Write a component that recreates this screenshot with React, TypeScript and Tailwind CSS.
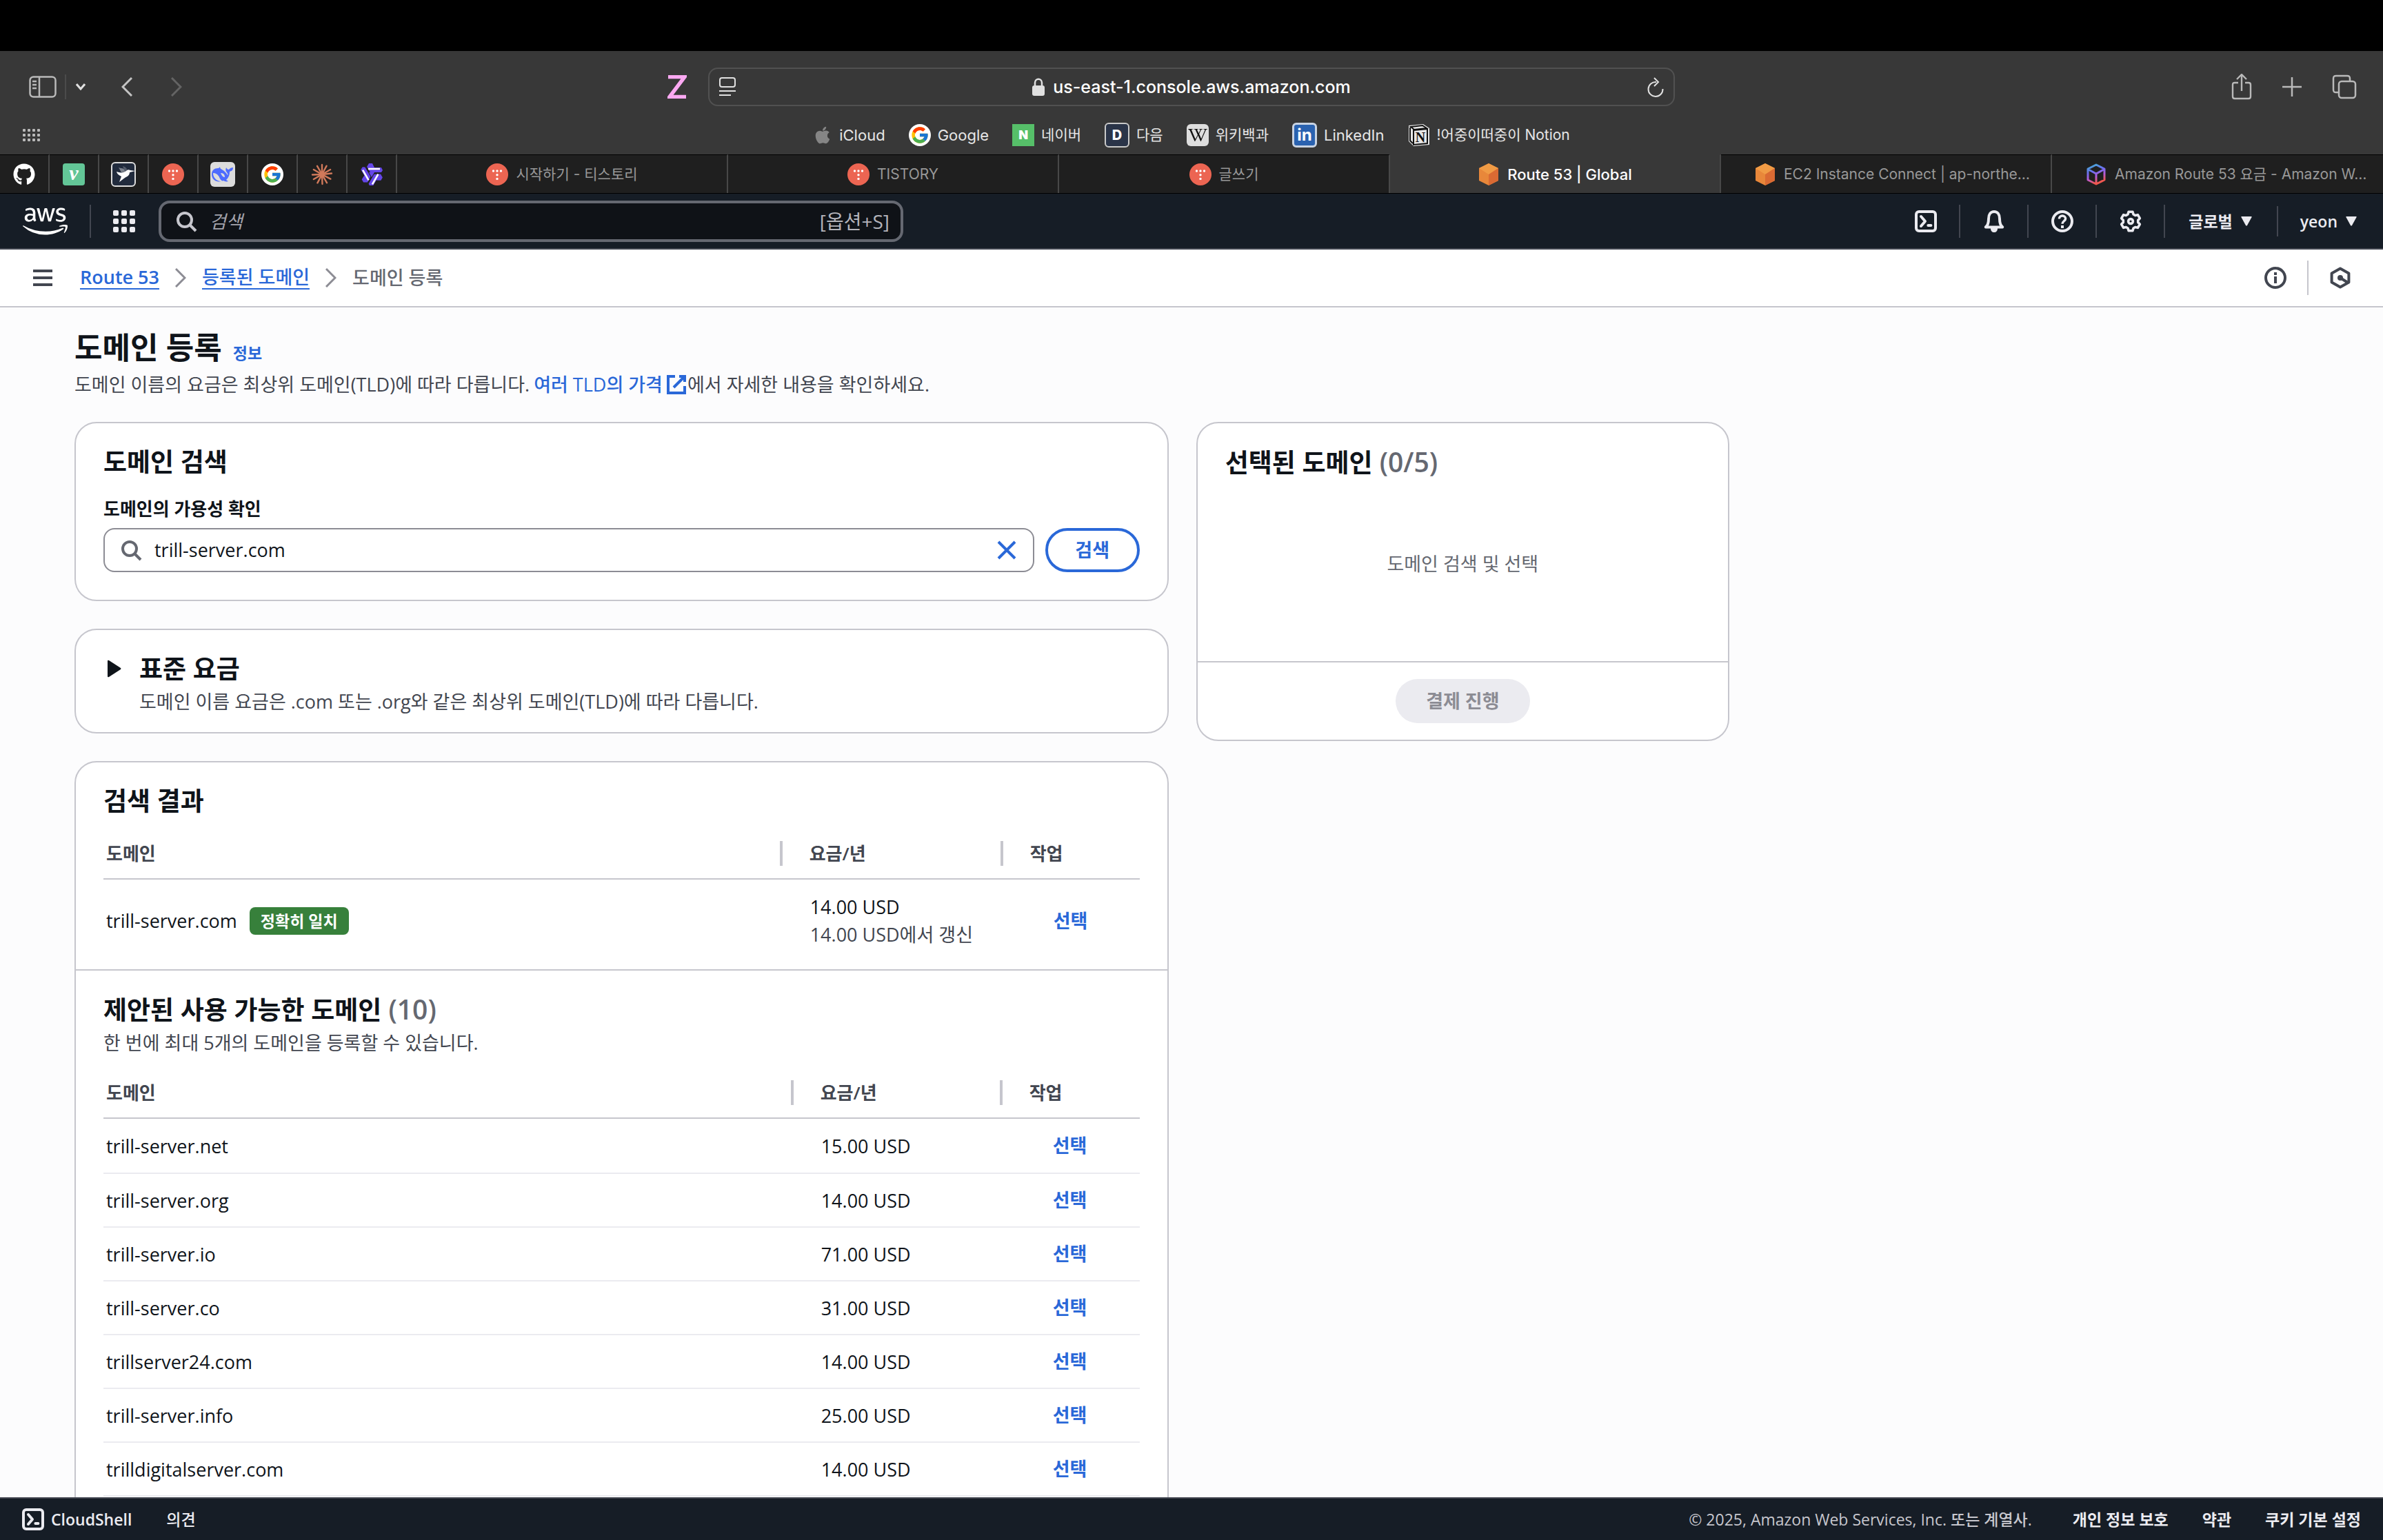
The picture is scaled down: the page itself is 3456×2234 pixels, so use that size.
import { useState, type ReactNode } from "react";
import clsx from "clsx";
import { FaApple, FaAws, FaGithub, FaWikipediaW } from "react-icons/fa";
import { FcGoogle } from "react-icons/fc";

interface Domain {
  name: string;
  price: string;
}

const SUGGESTED: Domain[] = [
  { name: "trill-server.net", price: "15.00 USD" },
  { name: "trill-server.org", price: "14.00 USD" },
  { name: "trill-server.io", price: "71.00 USD" },
  { name: "trill-server.co", price: "31.00 USD" },
  { name: "trillserver24.com", price: "14.00 USD" },
  { name: "trill-server.info", price: "25.00 USD" },
  { name: "trilldigitalserver.com", price: "14.00 USD" },
];

/* ---------- icons ---------- */

interface IconProps {
  className?: string;
  children?: ReactNode;
}

// 16-unit grid, 2-unit strokes
function Icon({ className = "size-8", children }: IconProps) {
  return (
    <svg
      viewBox="0 0 16 16"
      fill="none"
      stroke="currentColor"
      strokeWidth="2"
      className={clsx("shrink-0", className)}
      aria-hidden="true"
    >
      {children}
    </svg>
  );
}

function SearchIcon({ className }: IconProps) {
  return (
    <Icon className={className}>
      <circle cx="7" cy="7" r="5" />
      <path d="m15 15-4.5-4.5" />
    </Icon>
  );
}

function ShellIcon() {
  return (
    <Icon>
      <rect x="1" y="1" width="14" height="14" rx="2" />
      <path d="m4.5 4.5 3 3.5-3 3.5" strokeLinecap="round" strokeLinejoin="round" />
      <path d="M9.7 11h2" strokeLinecap="round" />
    </Icon>
  );
}

function BellIcon() {
  return (
    <Icon>
      <path
        d="M1.9 12.2c1.6-1.3 2.1-3 2.1-6C4 3 5.5 1 8 1s4 2 4 5.2c0 3 .5 4.7 2.1 6Z"
        strokeLinejoin="round"
      />
      <path d="M5.5 13h5c0 2-1 3-2.5 3s-2.5-1-2.5-3Z" fill="currentColor" stroke="none" />
    </Icon>
  );
}

function HelpIcon() {
  return (
    <Icon>
      <circle cx="8" cy="8" r="7" />
      <path d="M5.7 6.3C5.7 4.9 6.7 4 8 4s2.3.9 2.3 2.1C10.3 7.700 8 7.800 8 9.900" strokeWidth="1.7" />
      <path d="M8 11v2" />
    </Icon>
  );
}

function gearPath() {
  const points: string[] = [];
  for (let i = 0; i < 6; i++) {
    const mid = -90 + i * 60;
    for (const [offset, radius] of [[-22, 5.4], [-12, 7], [12, 7], [22, 5.4]]) {
      const a = ((mid + offset) * Math.PI) / 180;
      points.push(`${(8 + radius * Math.cos(a)).toFixed(2)} ${(8 + radius * Math.sin(a)).toFixed(2)}`);
    }
  }
  return `M${points.join("L")}Z`;
}

function GearIcon() {
  return (
    <Icon>
      <path d={gearPath()} strokeLinejoin="round" strokeWidth="1.8" />
      <circle cx="8" cy="8" r="1.7" strokeWidth="1.8" />
    </Icon>
  );
}

function TistoryIcon() {
  return (
    <svg viewBox="0 0 32 32" className="size-8 shrink-0" aria-hidden="true">
      <circle cx="16" cy="16" r="16" fill="#ec6552" />
      <g fill="#fff">
        <circle cx="10.5" cy="11" r="1.7" />
        <circle cx="16" cy="11" r="1.7" />
        <circle cx="21.5" cy="11" r="1.7" />
        <circle cx="16" cy="16.7" r="1.7" />
        <circle cx="16" cy="22.4" r="1.7" />
      </g>
    </svg>
  );
}

function GoogleIcon() {
  return (
    <span className="flex size-8 shrink-0 items-center justify-center rounded-full bg-white">
      <FcGoogle className="size-7" />
    </span>
  );
}

function CubeIcon() {
  return (
    <svg viewBox="0 0 32 32" className="size-8 shrink-0" aria-hidden="true">
      <path d="M16 0 30 7v18l-14 7L2 25V7Z" fill="#e8873a" />
      <path d="m16 0 14 7-14 9L2 7Z" fill="#f09b45" />
      <path d="M16 16 30 7v18l-14 7Z" fill="#da6a33" />
    </svg>
  );
}

function OutlineCubeIcon() {
  return (
    <svg viewBox="0 0 32 32" className="size-8 shrink-0" aria-hidden="true">
      <defs>
        <linearGradient id="cube" x1="0" y1="0" x2="0.3" y2="1">
          <stop offset="0" stopColor="#3fb4cf" />
          <stop offset="0.4" stopColor="#6a6ff0" />
          <stop offset="0.7" stopColor="#b55bd8" />
          <stop offset="1" stopColor="#f0574f" />
        </linearGradient>
      </defs>
      <path
        d="M16 2 28 8v16l-12 6L4 24V8Zm0 13v15M16 15 5 9M16 15l11-6"
        fill="none"
        stroke="url(#cube)"
        strokeWidth="3"
        strokeLinejoin="round"
      />
    </svg>
  );
}

function HummingbirdIcon() {
  return (
    <svg viewBox="0 0 36 36" className="size-9 shrink-0" aria-hidden="true">
      <rect x="1" y="1" width="34" height="34" rx="5" fill="#212b3d" stroke="#dcdcdc" strokeWidth="2" />
      <path d="m11 8 4 7 7-1c-2-4-5-5-8-5Z" fill="#7d838e" />
      <path d="m17 6 3 8 4-1c-1-4-3-6-7-7Z" fill="#545c6b" />
      <path d="M8 14c5 2 10 2 14-1 2-2 4-2 6-1l7 1-8 2c0 5-4 6-7 8-3 2-5 4-8 6l3-8c-3-2-6-3-7-7Z" fill="#fff" />
    </svg>
  );
}

function WhaleIcon() {
  return (
    <svg viewBox="0 0 36 36" className="size-9 shrink-0" aria-hidden="true">
      <rect width="36" height="36" rx="6" fill="#dcdcdc" />
      <path
        d="M2 18c0-6 4-9 9-9 2 0 2-1 3-2 0 2 1 3 3 4 4 2 6 5 8 8 1-1 0-2-1-4-2-2-2-4-1-7 1 2 2 3 4 3 1-2 4-3 6-3 0 4-2 5-5 6 0 6-2 9-5 12l3 2c-3 1-5 0-7-1-9 4-17-1-17-9Z"
        fill="#4d6bfe"
      />
      <path d="M4 16c4 0 7 2 9 6 1 3 3 5 5 6-7 1-14-4-14-12Z" fill="#dcdcdc" />
      <path d="M15 16c4 0 6 2 6 6-3 0-4-2-6-6Z" fill="#dcdcdc" />
    </svg>
  );
}

function BurstIcon() {
  const rays = [0, 28, 60, 84, 118, 150, 178, 208, 240, 268, 300, 330];
  return (
    <svg viewBox="0 0 32 32" className="size-8 shrink-0" aria-hidden="true">
      <g stroke="#d0795a" strokeWidth="2.4" strokeLinecap="round">
        {rays.map((deg) => (
          <path key={deg} d="M16 16V2" transform={`rotate(${deg} 16 16)`} />
        ))}
      </g>
      <circle cx="16" cy="16" r="4" fill="#d0795a" />
    </svg>
  );
}

function StarKnotIcon() {
  return (
    <svg viewBox="0 0 32 32" className="size-8 shrink-0" aria-hidden="true">
      {[0, 120, 240].map((deg) => (
        <g key={deg} transform={`rotate(${deg} 16 16)`}>
          <path d="M12 0h5l3 6h10l2 4-2 3H14L9 5Z" fill="#6546e8" />
          <path d="M11 8h17" stroke="#fff" strokeWidth="2.6" />
        </g>
      ))}
      <path d="M12 13h8l-4 7Z" fill="#6546e8" />
    </svg>
  );
}

function NotionIcon() {
  return (
    <svg viewBox="0 0 32 34" className="h-[34px] w-8 shrink-0" aria-hidden="true">
      <path d="M1 3 22 1l9 6v24L8 33l-7-7Z" fill="#e6e6e6" />
      <path d="M4 5 21 3l6 4L9 9Z" fill="none" stroke="#111" strokeWidth="2" />
      <path d="M8 10l20-2v21L8 31Z" fill="#e6e6e6" stroke="#111" strokeWidth="2" />
      <path d="M3 6v19l4 4" fill="none" stroke="#111" strokeWidth="2" />
      <text x="18" y="27" textAnchor="middle" className="fill-[#111] font-['Liberation_Serif',serif] text-[20px] font-bold">
        N
      </text>
    </svg>
  );
}

function Chevron({ className }: { className: string }) {
  return (
    <svg viewBox="0 0 16 28" className={clsx("h-7 w-4 shrink-0", className)} fill="none" aria-hidden="true">
      <path d="m1 1 13 13L1 27" stroke="currentColor" strokeWidth="3" />
    </svg>
  );
}

/* ---------- browser chrome ---------- */

function Toolbar() {
  return (
    <div className="grid h-[104px] grid-cols-[1fr_minmax(0,1402px)_1fr] items-center">
      <div className="flex items-center pr-[31px] pl-[42px] text-[#b9b9b9]">
        <button aria-label="사이드바">
          <svg viewBox="0 0 40 32" className="h-8 w-10" fill="none" stroke="currentColor" strokeWidth="2.5">
            <rect x="1.5" y="1.5" width="37" height="29" rx="5" />
            <path d="M15 2v28M5 8h6M5 13h6M5 18h6" />
          </svg>
        </button>
        <span className="ml-3 h-9 w-0.5 bg-[#4b4b4b]" />
        <button aria-label="탭 그룹" className="ml-[14px]">
          <svg viewBox="0 0 14 10" className="h-2.5 w-3.5" fill="none" stroke="#e0e0e0" strokeWidth="3">
            <path d="m1 1 6 7 6-7" />
          </svg>
        </button>
        <button aria-label="뒤로" className="ml-[52px] rotate-180">
          <Chevron className="text-[#c4c4c4]" />
        </button>
        <button aria-label="앞으로" className="ml-14">
          <Chevron className="text-[#646464]" />
        </button>
        <svg viewBox="0 0 28 34" className="ml-auto h-[34px] w-7" aria-label="확장 프로그램">
          <path d="M1 2.5h24L3 31.5h24" fill="none" stroke="#fba9f2" strokeWidth="5.500" />
        </svg>
      </div>
      <div className="flex h-14 items-center rounded-[14px] border-2 border-[#515151] px-3.5 text-[#e0e0e0]">
        <button aria-label="읽기 도구">
          <svg viewBox="0 0 24 28" className="h-7 w-6" fill="none" stroke="currentColor" strokeWidth="2">
            <rect x="1" y="1" width="22" height="13" rx="3" />
            <path d="M0 20h24M0 26h17" />
          </svg>
        </button>
        <div className="flex flex-1 items-center justify-center gap-3">
          <svg viewBox="0 0 18 26" className="h-[26px] w-[18px]" aria-hidden="true">
            <rect y="11" width="18" height="15" rx="3" fill="currentColor" />
            <path d="M4 12V7c0-7 10-7 10 0v5" fill="none" stroke="currentColor" strokeWidth="2.5" />
          </svg>
          <span className="text-[25px] leading-8 font-medium text-white">us-east-1.console.aws.amazon.com</span>
        </div>
        <button aria-label="새로 고침">
          <svg viewBox="0 0 24 30" className="h-[30px] w-6" fill="none" stroke="currentColor" strokeWidth="2">
            <path d="M13 8A10.5 10.5 0 1 0 22.5 18M10 2l6 6-6 6" />
          </svg>
        </button>
      </div>
      <div className="flex items-center justify-end gap-11 pr-[38px] text-[#b9b9b9]">
        <button aria-label="공유">
          <svg viewBox="0 0 30 38" className="h-[38px] w-[30px]" fill="none" stroke="currentColor" strokeWidth="2.4">
            <path d="M10 13H5c-2 0-3 1-3 3v17c0 2 1 3 3 3h20c2 0 3-1 3-3V16c0-2-1-3-3-3h-5M15 25V2M8 8l7-7 7 7" />
          </svg>
        </button>
        <button aria-label="새 탭">
          <svg viewBox="0 0 28 28" className="size-7" stroke="currentColor" strokeWidth="2.5">
            <path d="M14 0v28M0 14h28" />
          </svg>
        </button>
        <button aria-label="탭 개요">
          <svg viewBox="0 0 36 36" className="size-9" fill="none" stroke="currentColor" strokeWidth="2.5">
            <rect x="10" y="10" width="24" height="24" rx="4" />
            <path d="M10 26H6c-3 0-4-1-4-4V6c0-3 1-4 4-4h16c3 0 4 1 4 4v4" />
          </svg>
        </button>
      </div>
    </div>
  );
}

const BOOKMARKS: { label: string; icon: ReactNode; korean?: boolean }[] = [
  { label: "iCloud", icon: <FaApple className="size-7 text-[#858585]" /> },
  { label: "Google", icon: <GoogleIcon /> },
  {
    label: "네이버",
    korean: true,
    icon: (
      <span className="flex size-8 items-center justify-center bg-[#56bf69] text-[18px] font-black text-white">N</span>
    ),
  },
  {
    label: "다음",
    korean: true,
    icon: (
      <span className="flex size-9 items-center justify-center rounded-md border-2 border-[#c9c9c9] bg-[#2a3448] text-[20px] font-extrabold text-white">
        D
      </span>
    ),
  },
  {
    label: "위키백과",
    korean: true,
    icon: (
      <span className="flex size-8 items-center justify-center rounded-md bg-[#dedede] text-[#111]">
        <FaWikipediaW className="size-7" />
      </span>
    ),
  },
  {
    label: "LinkedIn",
    icon: (
      <span className="flex size-9 items-center justify-center rounded-md border-3 border-[#c9d3e2] bg-[#2a62b0] text-[24px] leading-6 font-bold text-white">
        in
      </span>
    ),
  },
  { label: "!어중이떠중이 Notion", korean: true, icon: <NotionIcon /> },
];

function Bookmarks() {
  return (
    <div className="grid h-[46px] grid-cols-[1fr_auto_1fr] items-center pb-4">
      <button aria-label="시작 페이지" className="justify-self-start pl-[33px]">
        <svg viewBox="0 0 26 18" className="h-[18px] w-[26px]" fill="#b9b9b9">
          {[0, 7, 14].map((y) =>
            [0, 7, 14, 21].map((x) => <rect key={`${x}-${y}`} x={x} y={y} width="4" height="4" rx="1" />)
          )}
        </svg>
      </button>
      <nav className="flex items-center gap-[34px]">
        {BOOKMARKS.map((b) => (
          <a
            key={b.label}
            href="#"
            className={clsx(
              "flex items-center gap-2.5 leading-8 text-[#e6e6e6]",
              b.korean ? "text-[21px]" : "text-[22px]"
            )}
          >
            {b.icon}
            {b.label}
          </a>
        ))}
      </nav>
      <span />
    </div>
  );
}

const PINNED: { label: string; icon: ReactNode }[] = [
  { label: "GitHub", icon: <FaGithub className="size-8 text-white" /> },
  {
    label: "velog",
    icon: (
      <span className="flex size-8 items-center justify-center rounded-sm bg-[#63c697] pb-1 font-['Liberation_Serif',serif] text-[30px] leading-7 font-bold text-white italic">
        v
      </span>
    ),
  },
  { label: "Hummingbird", icon: <HummingbirdIcon /> },
  { label: "TISTORY", icon: <TistoryIcon /> },
  { label: "DeepSeek", icon: <WhaleIcon /> },
  { label: "Google", icon: <GoogleIcon /> },
  { label: "Claude", icon: <BurstIcon /> },
  { label: "Qwen", icon: <StarKnotIcon /> },
];

interface Tab {
  label: string;
  icon: ReactNode;
  active?: boolean;
  long?: boolean;
}

const TABS: Tab[] = [
  { label: "시작하기 - 티스토리", icon: <TistoryIcon /> },
  { label: "TISTORY", icon: <TistoryIcon /> },
  { label: "글쓰기", icon: <TistoryIcon /> },
  { label: "Route 53 | Global", icon: <CubeIcon />, active: true },
  { label: "EC2 Instance Connect | ap-northe…", icon: <CubeIcon />, long: true },
  { label: "Amazon Route 53 요금 - Amazon W…", icon: <OutlineCubeIcon />, long: true },
];

function TabBar() {
  return (
    <div className="flex h-[57px] border-b border-black bg-[#1f1f1f]">
      {PINNED.map((p) => (
        <button
          key={p.label}
          aria-label={p.label}
          className="flex w-[72px] shrink-0 items-center justify-center border-t border-r-2 border-t-black border-r-[#484848]"
        >
          {p.icon}
        </button>
      ))}
      <div className="grid flex-1 grid-cols-6">
        {TABS.map((t) => (
          <button
            key={t.label}
            className={clsx(
              "flex min-w-0 items-center gap-[11px] border-t border-r-2 border-r-[#484848] leading-8 whitespace-nowrap last:border-r-0",
              t.long ? "justify-start pl-12" : "justify-center",
              t.active
                ? "border-t-[#383838] bg-[#383838] text-[22px] font-medium text-white"
                : "border-t-black text-[21px] text-[#989898]"
            )}
          >
            {t.icon}
            {t.label}
          </button>
        ))}
      </div>
    </div>
  );
}

/* ---------- console chrome ---------- */

function HeaderMenu({ label, className }: { label: string; className: string }) {
  return (
    <button className={clsx("flex h-11 items-center gap-3 text-[23px] leading-8 font-semibold", className)}>
      {label}
      <svg viewBox="0 0 16 14" className="h-3.5 w-4" fill="currentColor" aria-hidden="true">
        <path d="M1 0h14q1 0 .6 1L9 13q-1 1-2 0L.4 1Q0 0 1 0Z" />
      </svg>
    </button>
  );
}

function ConsoleHeader() {
  const tools = [
    { label: "CloudShell", icon: <ShellIcon /> },
    { label: "알림", icon: <BellIcon /> },
    { label: "지원", icon: <HelpIcon /> },
    { label: "설정", icon: <GearIcon /> },
  ];
  return (
    <header className="flex h-[81px] shrink-0 items-center border-b-2 border-[#424650] bg-[#161d26] text-[#ebebf0]">
      <a href="#" aria-label="AWS" className="flex h-12 w-[132px] items-center border-r-2 border-[#424650] pl-[33px]">
        <FaAws className="h-[52px] w-[65px] text-white" />
      </a>
      <button aria-label="서비스" className="ml-8">
        <svg viewBox="0 0 32 32" className="size-8" fill="currentColor">
          {[0, 12, 24].map((y) => [0, 12, 24].map((x) => <rect key={`${x}-${y}`} x={x} y={y} width="8" height="8" rx="2" />))}
        </svg>
      </button>
      <label className="ml-[34px] flex h-[60px] w-[1080px] items-center rounded-2xl border-4 border-[#656871] bg-[#0f1217] pr-4 pl-5 text-[#b4b4bb]">
        <SearchIcon className="size-8 text-[#c6c6cd]" />
        <input
          type="search"
          aria-label="검색"
          placeholder="검색"
          className="ml-[18px] min-w-0 flex-1 bg-transparent text-[26px] leading-9 outline-none placeholder:text-[#a4a4ad] placeholder:italic"
        />
        <kbd className="font-['Open_Sans','Noto_Sans_CJK_KR',sans-serif] text-[28px] leading-9">[옵션+S]</kbd>
      </label>
      <div className="ml-auto flex items-center">
        {tools.map((t) => (
          <button
            key={t.label}
            aria-label={t.label}
            className="flex h-12 w-[99px] items-center justify-center border-r-2 border-[#424650]"
          >
            {t.icon}
          </button>
        ))}
        <HeaderMenu label="글로벌" className="border-r-2 border-[#424650] pr-9 pl-[34px]" />
        <HeaderMenu label="yeon" className="pr-[38px] pl-8" />
      </div>
    </header>
  );
}

function Breadcrumbs() {
  return (
    <div className="flex h-[84px] shrink-0 items-center border-b-2 border-[#c6c6cd] bg-white pl-12 text-[#424650]">
      <button aria-label="메뉴">
        <svg viewBox="0 0 28 24" className="h-6 w-7" stroke="currentColor" strokeWidth="4">
          <path d="M0 2h28M0 12h28M0 22h28" />
        </svg>
      </button>
      <nav className="ml-10 flex items-center gap-[23px] text-[27px] leading-8" aria-label="이동 경로">
        <a href="#" className="border-b-2 border-[#2a68d8] font-semibold text-[#2a68d8]">
          Route 53
        </a>
        <Chevron className="text-[#8c8c94]" />
        <a href="#" className="border-b-2 border-[#2a68d8] font-medium text-[#2a68d8]">
          등록된 도메인
        </a>
        <Chevron className="text-[#8c8c94]" />
        <span className="font-medium text-[#656871]">도메인 등록</span>
      </nav>
      <div className="ml-auto flex items-center">
        <button aria-label="정보" className="flex h-[50px] items-center border-r-2 border-[#c6c6cd] pr-[30px]">
          <Icon>
            <circle cx="8" cy="8" r="7" />
            <path d="M8 7v5M8 4v2" />
          </Icon>
        </button>
        <button aria-label="Amazon Q" className="pr-[46px] pl-[30px]">
          <Icon>
            <path d="m8 1.2 6.2 3.5v6.6L8 14.8l-6.2-3.5V4.7Z" strokeLinejoin="round" />
            <circle cx="8" cy="8" r="2" fill="currentColor" stroke="none" />
            <path d="m8 8 5.5 3.5" />
          </Icon>
        </button>
      </div>
    </div>
  );
}

/* ---------- page ---------- */

function Title({ children, count }: { children: ReactNode; count?: string }) {
  return (
    <h2 className="text-[37px] leading-12 font-bold text-[#0f141a]">
      {children}
      {count && <span className="text-[39px] leading-12 font-semibold text-[#656871]"> {count}</span>}
    </h2>
  );
}

interface DomainTableProps {
  label: string;
  priceCol: string;
  actionCol: string;
  children: ReactNode;
}

function DomainTable({ label, priceCol, actionCol, children }: DomainTableProps) {
  return (
    <table aria-label={label} className="mt-4 w-full table-fixed border-separate border-spacing-0 text-left">
      <colgroup>
        <col />
        <col className={priceCol} />
        <col className={actionCol} />
      </colgroup>
      <thead className="text-[26px] leading-9 text-[#424650]">
        <tr>
          <th className="h-[74px] border-b-2 border-[#c6c6cd] p-0 font-semibold">
            <div className="border-r-4 border-[#c6c6cd] pl-1">도메인</div>
          </th>
          <th className="border-b-2 border-[#c6c6cd] p-0 font-semibold">
            <div className="border-r-4 border-[#c6c6cd] pl-[39px]">요금/년</div>
          </th>
          <th className="border-b-2 border-[#c6c6cd] p-0 font-semibold">
            <div className="pl-[39px]">작업</div>
          </th>
        </tr>
      </thead>
      <tbody className="text-[27px] leading-10 font-medium text-[#0f141a]">{children}</tbody>
    </table>
  );
}

function SelectButton({ name }: { name: string }) {
  return (
    <button aria-label={`${name} 선택`} className="pl-[73px] font-bold text-[#2a68d8]">
      선택
    </button>
  );
}

function SearchCard() {
  const [query, setQuery] = useState("trill-server.com");
  return (
    <section className="rounded-[32px] border-2 border-[#c6c6cd] bg-white px-10 pt-8 pb-10">
      <Title>도메인 검색</Title>
      <label htmlFor="domain" className="mt-6 block text-[26px] leading-10 font-bold text-[#0f141a]">
        도메인의 가용성 확인
      </label>
      <div className="mt-2 flex gap-4">
        <div className="flex h-16 flex-1 items-center rounded-2xl border-2 border-[#8c8c94] px-[22px]">
          <SearchIcon className="size-8 text-[#656871]" />
          <input
            id="domain"
            value={query}
            onChange={(e) => setQuery(e.target.value)}
            className="ml-[18px] min-w-0 flex-1 text-[27px] leading-10 font-medium text-[#0f141a] outline-none"
          />
          <button aria-label="지우기" onClick={() => setQuery("")} className="text-[#2a68d8]">
            <Icon>
              <path d="m2 2 12 12M14 2 2 14" />
            </Icon>
          </button>
        </div>
        <button className="h-16 w-[137px] rounded-full border-4 border-[#2a68d8] text-[27px] leading-9 font-bold text-[#2a68d8]">
          검색
        </button>
      </div>
    </section>
  );
}

function PricingCard() {
  return (
    <section className="flex rounded-[32px] border-2 border-[#c6c6cd] bg-white px-10 pt-8 pb-6">
      <button aria-label="표준 요금 펼치기" className="flex h-12 w-13 items-center pl-1.5">
        <svg viewBox="0 0 20 26" className="h-[26px] w-5" fill="#0f141a">
          <path d="M0 2q0-2 2-1l17 11q1 1 0 2L2 25q-2 1-2-1Z" />
        </svg>
      </button>
      <div>
        <Title>표준 요금</Title>
        <p className="mt-1 text-[27px] leading-10 text-[#424650]">
          도메인 이름 요금은 .com 또는 .org와 같은 최상위 도메인(TLD)에 따라 다릅니다.
        </p>
      </div>
    </section>
  );
}

function ResultsCard() {
  return (
    <section className="rounded-[32px] border-2 border-[#c6c6cd] bg-white pb-20">
      <div className="border-b-2 border-[#c6c6cd] px-10 pt-8 pb-2.5">
        <Title>검색 결과</Title>
        <DomainTable label="검색 결과" priceCol="w-[320px]" actionCol="w-[198px]">
          <tr className="h-[120px]">
            <td className="p-0 pl-1">
              <div className="flex items-center gap-[18px]">
                trill-server.com
                <span className="rounded-lg bg-[#37803b] px-4 text-[23px] leading-10 font-bold text-white">
                  정확히 일치
                </span>
              </div>
            </td>
            <td className="p-0 pl-10">
              <div>14.00 USD</div>
              <div className="font-normal whitespace-nowrap text-[#424650]">14.00 USD에서 갱신</div>
            </td>
            <td className="p-0">
              <SelectButton name="trill-server.com" />
            </td>
          </tr>
        </DomainTable>
      </div>
      <div className="px-10 pt-8">
        <Title count="(10)">제안된 사용 가능한 도메인</Title>
        <p className="mt-1 text-[27px] leading-10 text-[#424650]">한 번에 최대 5개의 도메인을 등록할 수 있습니다.</p>
        <DomainTable label="제안된 도메인" priceCol="w-[303px]" actionCol="w-[199px]">
          {SUGGESTED.map((d) => (
            <tr key={d.name} className="h-[78px] first:h-20">
              <td className="border-b-2 border-[#ebebf0] p-0 pt-0.5 pl-1">{d.name}</td>
              <td className="border-b-2 border-[#ebebf0] p-0 pt-0.5 pl-10">{d.price}</td>
              <td className="border-b-2 border-[#ebebf0] p-0">
                <SelectButton name={d.name} />
              </td>
            </tr>
          ))}
        </DomainTable>
      </div>
    </section>
  );
}

function SelectedCard() {
  return (
    <aside className="col-span-4 self-start rounded-[32px] border-2 border-[#c6c6cd] bg-white">
      <div className="px-10 pt-8">
        <Title count="(0/5)">선택된 도메인</Title>
        <p className="pt-[103px] pb-[121px] text-center text-[27px] leading-10 text-[#656871]">도메인 검색 및 선택</p>
      </div>
      <div className="flex justify-center border-t-2 border-[#c6c6cd] py-6">
        <button disabled className="h-16 rounded-full bg-[#ebebf0] px-11 text-[27px] leading-9 font-semibold text-[#8c8c94]">
          결제 진행
        </button>
      </div>
    </aside>
  );
}

function Footer() {
  return (
    <footer className="flex h-[62px] shrink-0 items-center border-t-2 border-[#424650] bg-[#161d26] px-8 text-[23px] leading-8 text-[#ebebf0]">
      <button className="flex items-center gap-2.5 font-semibold">
        <ShellIcon />
        CloudShell
      </button>
      <a href="#" className="ml-[50px] font-medium">
        의견
      </a>
      <p className="ml-auto font-medium text-[#c6c6cd]">© 2025, Amazon Web Services, Inc. 또는 계열사.</p>
      <nav className="ml-[59px] flex gap-[49px] font-semibold">
        <a href="#">개인 정보 보호</a>
        <a href="#">약관</a>
        <a href="#">쿠키 기본 설정</a>
      </nav>
    </footer>
  );
}

export default function App() {
  return (
    <div className="flex h-screen flex-col overflow-hidden bg-[#fcfcfd] font-['Open_Sans','Noto_Sans_CJK_KR',sans-serif]">
      <div className="shrink-0 border-t-74 border-black bg-[#383838] font-['Inter','Noto_Sans_CJK_KR',sans-serif]">
        <Toolbar />
        <Bookmarks />
        <TabBar />
      </div>
      <ConsoleHeader />
      <Breadcrumbs />
      <main className="min-h-0 flex-1 overflow-hidden px-[108px] pt-7">
        <div className="flex items-baseline gap-4">
          <h1 className="text-[44px] leading-[60px] font-bold text-[#0f141a]">도메인 등록</h1>
          <a href="#" className="text-[23px] font-bold text-[#2a68d8]">
            정보
          </a>
        </div>
        <p className="mt-1 flex items-center text-[27px] leading-10 text-[#424650]">
          도메인 이름의 요금은 최상위 도메인(TLD)에 따라 다릅니다.
          <a href="#" className="ml-1.5 flex items-center gap-1 font-medium text-[#2a68d8]">
            여러 TLD의 가격
            <Icon>
              <path d="M10 2h4v4M6 10l8-8M14 9v5H2V2h5" />
            </Icon>
          </a>
          에서 자세한 내용을 확인하세요.
        </p>
        <div className="mt-[34px] grid max-w-[2400px] grid-cols-12 gap-10">
          <div className="col-span-8 flex flex-col gap-10">
            <SearchCard />
            <PricingCard />
            <ResultsCard />
          </div>
          <SelectedCard />
        </div>
      </main>
      <Footer />
    </div>
  );
}
